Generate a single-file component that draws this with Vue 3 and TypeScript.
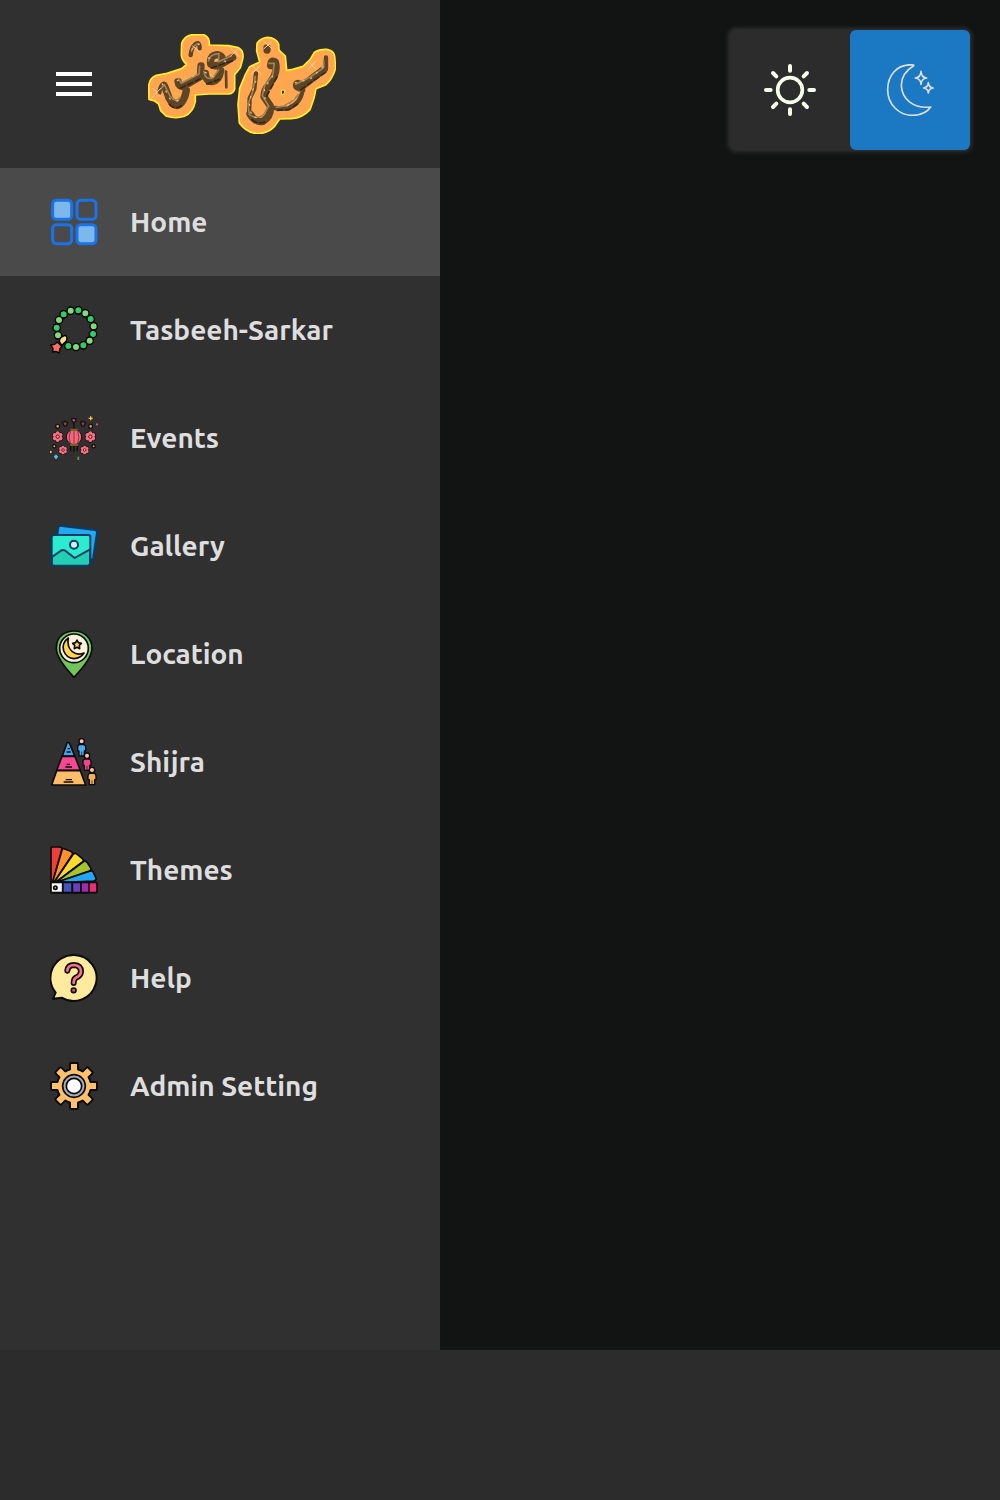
<script setup lang="ts">
import { ref } from 'vue'

type Theme = 'light' | 'dark'

const items: string[] = [
  'Home',
  'Tasbeeh-Sarkar',
  'Events',
  'Gallery',
  'Location',
  'Shijra',
  'Themes',
  'Help',
  'Admin Setting',
]
const active = ref<string>('Home')
const theme = ref<Theme>('dark')

const beads: [number, number][] = [
  [92, 47], [115, 46], [136, 55], [152, 72], [161, 94], [159, 117], [149, 137],
  [130, 151], [108, 156], [85, 153], [54, 121], [50, 98], [57, 75], [71, 58],
]
const flowers: [number, number, number][] = [
  [53, 101, 1], [151, 101, 1], [69, 141, 0.8], [134, 141, 0.8],
]
const petals = [0, 60, 120, 180, 240, 300]
const people = [
  { x: 125, y: 43, color: '#4aa9f5' },
  { x: 141, y: 86, color: '#f5428c' },
  { x: 156, y: 129, color: '#f7b155' },
]
const rays = [0, 45, 90, 135, 180, 225, 270, 315]
const teeth = [0, 45, 90, 135, 180, 225, 270, 315]
</script>

<template>
  <div class="shell">
    <aside class="sidebar">
      <header class="brand">
        <button class="menu" type="button" aria-label="Toggle menu">
          <svg viewBox="0 0 24 24" width="48" height="48" fill="#fff" aria-hidden="true">
            <path d="M3 18h18v-2H3v2zm0-5h18v-2H3v2zm0-7v2h18V6H3z" />
          </svg>
        </button>
        <svg class="logo" viewBox="54 42 564 300" aria-hidden="true">
          <g fill="#ffa64f" stroke="#ffee2e" stroke-width="5" stroke-linejoin="round">
            <path d="M57 238 56 198Q59 174 76 167L111 160 155 146 170 133Q154 119 154 104L155 70Q166 42 197 44H221Q240 52 238 75L296 77 325 83Q343 91 338 118L331 143 314 164V207Q311 220 297 222H236L196 225V244Q190 277 163 289Q137 298 108 288L92 272 86 252 74 243Z" />
            <path d="M328 309 324 254 329 205 346 164 359 140 389 126 380 93 381 70Q392 54 412 52Q437 53 446 72L447 90 466 108 470 151 488 148 519 139 540 119 553 97Q568 87 590 88Q612 91 614 109L617 144Q608 177 588 194L558 206 552 235 540 269Q518 294 484 296L449 297 433 320Q415 339 386 341Q350 340 328 309Z" />
          </g>
          <path d="M455 210 464 211 463 221 454 224Z" fill="#303030" stroke="#ffee2e" stroke-width="3" />
          <g fill="none" stroke-linecap="round" stroke-linejoin="round">
            <g stroke="#5e4526">
              <g stroke-width="13">
                <path d="M182 105Q184 82 197 72Q209 64 209 85M88 218Q91 195 101 191M378 160 373 207 359 235 357 282M435 264Q457 268 475 265Q514 248 517 211M588 112V146" />
                <path d="M288 155 289 202" stroke-width="8" />
              </g>
              <g stroke-width="22">
                <path d="M103 197Q109 210 117 234Q138 272 156 246Q166 233 169 211M144 185Q146 202 162 198L211 170 213 138M226 160Q228 186 246 185Q268 181 272 152M242 132Q238 106 262 104Q283 108 277 130Q256 142 246 134M278 130 308 112" />
                <path d="M360 282Q376 308 399 304Q424 288 421 258L402 230Q403 209 415 197L433 168Q442 145 436 126Q421 118 422 137M411 84V90M582 148 548 174 512 202Q496 203 501 191Q511 188 515 209" />
              </g>
            </g>
            <g stroke="#a38354" stroke-width="5">
              <path d="M184 94Q189 76 205 71M92 207 103 194 120 228Q138 250 150 233M144 175 154 190 207 162 209 138M222 155Q226 181 248 174L266 150M235 123Q240 102 267 101L265 125 303 108" />
              <path d="M376 170 368 216 354 252 358 284Q382 300 402 283L416 258 397 227 404 196 428 166 433 130 417 130M581 121V143L541 171 497 193M510 215Q497 242 462 258L439 262" />
            </g>
            <g stroke="#d5c39c" stroke-width="4" stroke-dasharray="3 21">
              <path d="M186 88 208 72M97 192 119 236 148 243M142 182 204 164M226 157 263 178M236 114 287 124M377 184 357 246 365 290 398 297M405 236 403 205 437 155M496 188 541 177 587 132M507 218 472 257" />
            </g>
            <g stroke="#33271a" stroke-width="5" stroke-dasharray="16 9">
              <path d="M118 253Q136 273 158 254M151 205 216 174M230 192 274 176M244 144 311 121M366 299Q385 316 410 303M410 229 440 172M512 209 588 156M442 271 477 269 510 247" />
            </g>
            <path d="M68 205 92 229M66 234 91 206M301 83 328 110M302 108 327 84M365 136 393 163M364 162 392 136M401 64 426 86M401 87 425 65M535 124 557 146M535 147 556 125M188 78 214 101" stroke="#ffd49b" stroke-width="3" />
          </g>
        </svg>
      </header>

      <nav aria-label="Main">
        <a
          v-for="item in items"
          :key="item"
          href="#"
          class="item"
          :class="{ active: active === item }"
          @click.prevent="active = item"
        >
          <svg v-if="item === 'Home'" class="icon" viewBox="30 24 144 144" aria-hidden="true">
            <g stroke="#1a73e8" stroke-width="9">
              <rect x="38" y="31" width="57" height="57" rx="11" fill="#7db8ea" />
              <rect x="111" y="31" width="57" height="57" rx="11" fill="none" />
              <rect x="38" y="104" width="57" height="57" rx="11" fill="none" />
              <rect x="111" y="104" width="57" height="57" rx="11" fill="#7db8ea" />
            </g>
          </svg>

          <svg v-else-if="item === 'Tasbeeh-Sarkar'" class="icon" viewBox="30 33 144 144" aria-hidden="true">
            <g stroke="#000" stroke-width="4">
              <circle
                v-for="([x, y], i) in beads"
                :key="i"
                :cx="x"
                :cy="y"
                r="11"
                :fill="i % 2 ? '#35c968' : '#82d978'"
              />
              <path d="M58 139Q59 126 76 121Q84 127 79 138L65 151Z" fill="#ffe07d" />
              <path d="M32 150 44 148 52 141 65 154 60 161 57 174 48 169 38 171 39 160Z" fill="#ff6c63" stroke-linejoin="round" />
            </g>
          </svg>

          <svg v-else-if="item === 'Events'" class="icon" viewBox="30 33 144 144" aria-hidden="true">
            <path d="M102 58V81M92 127V144M102 128V146M112 127V144" stroke="#0c0c0c" stroke-width="4" />
            <circle cx="102" cy="102" r="23" fill="#f5657c" stroke="#151010" stroke-width="3" />
            <path d="M102 82V124M91 84Q84 103 91 122M113 84Q120 103 113 122" fill="none" stroke="#8c3545" stroke-width="3" />
            <path d="M91 80H113M90 126H114" stroke="#7b5a20" stroke-width="6" />
            <g v-for="([x, y, s], i) in flowers" :key="i" :transform="`translate(${x} ${y}) scale(${s})`">
              <g fill="#151010">
                <circle v-for="a in petals" :key="a" :transform="`rotate(${a})`" cy="-10" r="8" />
              </g>
              <g fill="#fb6f84">
                <circle v-for="a in petals" :key="a" :transform="`rotate(${a})`" cy="-10" r="6" />
                <circle r="10" />
              </g>
              <circle r="5" fill="#f79a90" stroke="#4a1520" stroke-width="3" />
            </g>
            <g stroke="#111" stroke-width="4">
              <path d="M95 47H108L107 55 102 59 96 54Z" fill="#d84c5c" />
              <path d="M67 58 75 55 83 59 79 69 73 70ZM121 58 129 55 137 59 132 69 126 70Z" fill="#9e3447" />
              <circle cx="53" cy="70" r="6" fill="#e89552" />
              <circle cx="152" cy="70" r="6" fill="#e89552" />
              <circle cx="43" cy="130" r="5" fill="#e5b04a" />
              <circle cx="161" cy="130" r="5" fill="#e5864a" />
            </g>
            <path d="M152 40V52M146 46H158M32 144V150M29 147H35" stroke="#ffc34d" stroke-width="4" />
            <path d="M48 155V168M42 161H54" stroke="#58bdf5" stroke-width="5" />
            <path d="M115 161V171" stroke="#5f9e47" stroke-width="5" />
            <path d="M168 64H174" stroke="#e65269" stroke-width="5" />
          </svg>

          <svg v-else-if="item === 'Gallery'" class="icon" viewBox="30 33 144 144" aria-hidden="true">
            <g stroke="#083c65" stroke-width="6" stroke-linejoin="round" stroke-linecap="round">
              <path d="M60 44 166 57Q172 59 171 65L159 145 149 147 51 77 55 49Q56 44 60 44Z" fill="#22a8ee" />
              <rect x="35" y="72" width="116" height="92" rx="7" fill="#2ceccf" />
              <path d="M36 138 63 119Q69 115 76 119L104 141 150 115V157Q150 164 143 164H42Q36 164 36 158Z" fill="#22cfb4" />
              <circle cx="102" cy="101" r="12" fill="#d8edff" />
            </g>
          </svg>

          <svg v-else-if="item === 'Location'" class="icon" viewBox="30 33 144 144" aria-hidden="true">
            <g stroke="#0b0b0b" stroke-width="5" stroke-linejoin="round">
              <path d="M102 175Q49 119 49 88Q49 61 67 47Q82 36 102 36Q125 36 140 50Q156 65 156 88Q156 119 102 175Z" fill="#70c65a" />
              <circle cx="102" cy="88" r="43" fill="#fff1dc" />
              <path d="M85 57Q64 72 71 95Q79 117 102 119Q122 118 132 102Q113 110 97 98Q80 84 85 57Z" fill="#ffd650" />
              <path d="M111 63 115 71 124 73 118 79 119 89 111 85 103 89 104 79 98 73 107 71Z" fill="#ffd650" />
            </g>
          </svg>

          <svg v-else-if="item === 'Shijra'" class="icon" viewBox="30 33 144 144" aria-hidden="true">
            <g stroke="#0b0b0b" stroke-width="5" stroke-linejoin="round">
              <path d="M84 46Q88 46 90 52L104 87H67L80 51Q81 47 84 46Z" fill="#43a5ef" />
              <path d="M66 88H105L121 130H50Z" fill="#f54890" />
              <path d="M50 131H121L137 174H35Z" fill="#ffbd69" />
              <path d="M83 65H90M80 75H92M80 112H90M76 120H96M77 158H96M71 165H100" fill="none" stroke-width="4" />
              <g v-for="p in people" :key="p.y" :transform="`translate(${p.x} ${p.y})`" stroke-width="4">
                <path d="M-7 10H7Q12 12 12 18V29H8V44H-8V29H-12V18Q-12 12-7 10Z" :fill="p.color" />
                <path d="M0 31V44" stroke-width="2" />
                <circle r="8" fill="#ffc3a4" />
              </g>
            </g>
          </svg>

          <svg v-else-if="item === 'Themes'" class="icon" viewBox="30 33 144 144" aria-hidden="true">
            <g stroke="#0b0b0b" stroke-width="5" stroke-linejoin="round">
              <path d="M33 141V39Q33 36 37 36H61Q66 37 66 42L38 141Z" fill="#ef3f3a" />
              <path d="M38 141 66 46Q67 40 72 41L92 49Q99 52 97 58L43 141Z" fill="#ff922c" />
              <path d="M43 141 98 60Q103 53 109 56L126 70Q133 76 127 81L48 141Z" fill="#ffdb2d" />
              <path d="M48 141 128 82Q135 75 141 82L151 97Q156 104 148 108L52 141Z" fill="#a5c42d" />
              <path d="M52 141 149 109Q157 105 160 112L167 127Q171 136 161 138L90 141Z" fill="#20a8f4" />
              <rect x="33" y="142" width="138" height="31" rx="4" fill="#e82e76" />
              <path d="M68 142H97V173H68Z" fill="#4255b8" />
              <path d="M97 142H123V173H97Z" fill="#6940b5" />
              <path d="M123 142H147V173H123Z" fill="#9c2bb0" />
              <path d="M33 142H68V173H36Q33 173 33 169Z" fill="#f6f6fb" />
              <circle cx="46" cy="158" r="5" fill="#aaa" />
            </g>
          </svg>

          <svg v-else-if="item === 'Help'" class="icon" viewBox="30 33 144 144" aria-hidden="true">
            <path d="M102 36A69 69 0 1 1 65 164L39 167 47 149A69 69 0 0 1 102 36Z" fill="#ffeb9d" stroke="#0b0b0b" stroke-width="6" stroke-linejoin="round" />
            <g fill="none" stroke-linecap="round" stroke-linejoin="round">
              <path d="M82 83Q84 66 102 66Q123 67 123 86Q122 98 108 104Q101 108 101 120" stroke="#0b0b0b" stroke-width="18" />
              <path d="M82 83Q84 66 102 66Q123 67 123 86Q122 98 108 104Q101 108 101 120" stroke="#fb7188" stroke-width="8" />
            </g>
            <circle cx="101" cy="142" r="7" fill="#e4566c" stroke="#0b0b0b" stroke-width="5" />
          </svg>

          <svg v-else class="icon" viewBox="30 33 144 144" aria-hidden="true">
            <g transform="translate(102 105)">
              <g fill="#ffc06c" stroke="#0b0b0b" stroke-width="6" stroke-linejoin="round">
                <path v-for="a in teeth" :key="a" d="M-15-44-12-50V-66Q-12-69-9-69H9Q12-69 12-66V-50L15-44Z" :transform="`rotate(${a})`" />
                <circle r="51" />
              </g>
              <g fill="#ffc06c">
                <path v-for="a in teeth" :key="a" d="M-12-42-9-50V-64H9V-50L12-42Z" :transform="`rotate(${a})`" />
              </g>
              <circle r="34" fill="#a9aabb" stroke="#0b0b0b" stroke-width="5" />
              <circle r="23" fill="#fff" stroke="#0b0b0b" stroke-width="5" />
            </g>
          </svg>
          <span>{{ item }}</span>
        </a>
      </nav>
    </aside>

    <main class="content">
      <div class="switch" role="group" aria-label="Theme">
        <button
          type="button"
          aria-label="Light"
          :class="{ on: theme === 'light' }"
          @click="theme = 'light'"
        >
          <svg viewBox="-78 -78 156 156" width="52" height="52" fill="none" stroke="#f7fde8" stroke-linecap="round" aria-hidden="true">
            <circle r="37" stroke-width="11" />
            <path v-for="a in rays" :key="a" d="M0-72V-58" stroke-width="12" :transform="`rotate(${a})`" />
          </svg>
        </button>
        <button
          type="button"
          aria-label="Dark"
          :class="{ on: theme === 'dark' }"
          @click="theme = 'dark'"
        >
          <svg viewBox="528 162 144 156" width="48" height="52" fill="none" stroke="#dedede" stroke-width="5" stroke-linejoin="round" aria-hidden="true">
            <path d="M611 165C558 159 533 200 533 239C533 283 567 316 607 316C631 316 651 307 662 291C611 297 575 268 574 226C574 198 591 179 611 167Z" />
            <path d="M633 184Q634 202 650 204Q634 206 633 223Q632 206 616 204Q632 202 633 184ZM655 218Q656 232 669 234Q656 236 655 249Q654 236 641 234Q654 232 655 218Z" />
          </svg>
        </button>
      </div>
    </main>
  </div>
</template>

<style>
body {
  margin: 0;
  background: #2c2c2c;
}
</style>

<style scoped>
.shell {
  display: flex;
  min-height: 90vh;
  background: #121413;
  font-family: Ubuntu, 'Noto Sans', sans-serif;
}
.sidebar {
  width: 44%;
  flex-shrink: 0;
  background: #303030;
}
.brand {
  display: flex;
  align-items: center;
  gap: 50px;
  padding: 34px 50px;
}
button {
  border: 0;
  padding: 0;
  background: none;
  cursor: pointer;
}
.menu,
.menu svg,
.logo,
.icon {
  display: block;
}
.logo {
  width: 188px;
  height: 100px;
}
.item {
  display: flex;
  align-items: center;
  gap: 32px;
  padding: 30px 50px;
  color: #dedede;
  font-size: 28px;
  font-weight: 600;
  line-height: 48px;
  text-decoration: none;
  white-space: nowrap;
}
.item.active {
  background: #4a4a4a;
}
.icon {
  width: 48px;
  height: 48px;
  flex-shrink: 0;
}
.content {
  flex: 1;
  display: flex;
  justify-content: flex-end;
  align-items: flex-start;
  padding: 30px;
}
.switch {
  display: flex;
  border-radius: 6px;
  background: #2c2c2c;
  box-shadow: 0 0 4px 2px #303030;
}
.switch button {
  display: grid;
  place-items: center;
  width: 120px;
  height: 120px;
  border-radius: 6px;
}
.switch .on {
  background: #1b78c2;
}
</style>
